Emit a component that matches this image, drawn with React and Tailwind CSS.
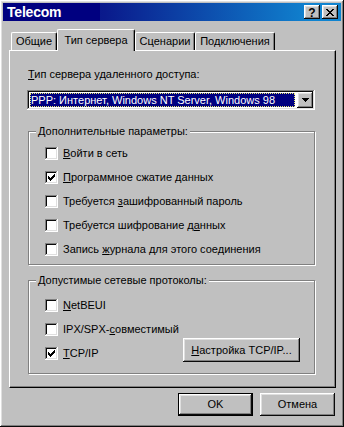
import React from 'react';

// Win98 bevels
const raised =
  'shadow-[inset_-1px_-1px_#0a0a0a,inset_1px_1px_#ffffff,inset_-2px_-2px_#808080,inset_2px_2px_#dfdfdf]';
const sunken =
  'shadow-[inset_-1px_-1px_#ffffff,inset_1px_1px_#808080,inset_-2px_-2px_#dfdfdf,inset_2px_2px_#0a0a0a]';

const CHECK_COLS = [2, 3, 4, 3, 2, 1, 0];

const Check = () => (
  <svg width="7" height="7" viewBox="0 0 7 7" shapeRendering="crispEdges">
    {CHECK_COLS.map((y, x) => (
      <rect key={x} x={x} y={y} width="1" height="3" fill="#000" />
    ))}
  </svg>
);

const Checkbox = ({ checked, children }) => (
  <div className="flex items-center h-[24px]">
    <div className={`w-[13px] h-[13px] bg-white flex items-center justify-center ${sunken}`}>
      {checked && <Check />}
    </div>
    <span className="ml-[5px]">{children}</span>
  </div>
);

const GroupBox = ({ label, className, children }) => (
  <div
    className={`relative ml-[1px] w-[287px] border border-[#808080] shadow-[inset_1px_1px_#ffffff,1px_1px_#ffffff] ${className}`}
  >
    <span className="absolute left-[7px] top-[-7px] bg-[#c0c0c0] px-[2px] leading-[13px]">{label}</span>
    {children}
  </div>
);

const Tab = ({ active, className, children }) => (
  <div
    className={`flex items-center justify-center border-t border-l border-white border-r border-r-black rounded-tl-[2px] rounded-tr-[2px] shadow-[inset_-1px_0_#808080] bg-[#c0c0c0] ${
      active ? 'relative z-10 h-[22px] -mb-[1px]' : 'h-[18px]'
    } ${className}`}
  >
    {children}
  </div>
);

const TitleButton = ({ children }) => (
  <div className={`w-[16px] h-[14px] bg-[#c0c0c0] flex items-center justify-center ${raised}`}>{children}</div>
);

const CLOSE_PX = [
  [0, 0], [1, 0], [6, 0], [7, 0],
  [1, 1], [2, 1], [5, 1], [6, 1],
  [2, 2], [3, 2], [4, 2], [5, 2],
  [3, 3], [4, 3],
  [2, 4], [3, 4], [4, 4], [5, 4],
  [1, 5], [2, 5], [5, 5], [6, 5],
  [0, 6], [1, 6], [6, 6], [7, 6],
];

export default function App() {
  return (
    <div
      className={`w-[344px] h-[427px] bg-[#c0c0c0] p-[3px] flex flex-col text-[11px] text-black ${raised}`}
      style={{ fontFamily: '"Liberation Sans", Arial, sans-serif' }}
    >
      {/* title bar */}
      <div className="h-[18px] flex items-center bg-[linear-gradient(90deg,#000080_0%,#0a1a8c_30%,#1084d0_92%)]">
        <div className="w-[97px] h-full bg-[#000080] flex items-center pl-[4px]">
          <span className="text-white font-bold text-[14px] leading-none tracking-[-0.2px]">Telecom</span>
        </div>
        <div className="flex-1" />
        <div className="flex gap-[2px] pr-[3px]">
          <TitleButton>
            <span className="font-bold text-[12px] leading-none mt-[1px]">?</span>
          </TitleButton>
          <TitleButton>
            <svg width="8" height="7" viewBox="0 0 8 7" shapeRendering="crispEdges">
              {CLOSE_PX.map(([x, y], i) => (
                <rect key={i} x={x} y={y} width="1" height="1" fill="#000" />
              ))}
            </svg>
          </TitleButton>
        </div>
      </div>

      {/* tabs */}
      <div className="mt-[8px] pl-[6px] flex items-end h-[21px]">
        <Tab className="ml-[2px] w-[46px]">Общие</Tab>
        <Tab active className="w-[78px]">Тип сервера</Tab>
        <Tab className="w-[60px]">Сценарии</Tab>
        <Tab className="w-[80px]">Подключения</Tab>
      </div>

      {/* panel */}
      <div className="ml-[6px] w-[327px] h-[338px] border-t border-l border-white border-r border-b border-r-black border-b-black shadow-[inset_-1px_-1px_#808080] pl-[17px] flex flex-col">
        <div className="mt-[17px] ml-[1px] leading-[13px]">
          <u>Т</u>ип сервера удаленного доступа:
        </div>

        <div className={`mt-[9px] w-[288px] h-[20px] bg-white p-[2px] flex ${sunken}`}>
          <div className="flex-1 p-[1px] pr-[2px]">
            <div className="h-full bg-[#000080] text-white flex items-center pl-[1px] leading-none outline outline-1 outline-dotted outline-offset-[-1px] outline-[#e8e870]">
              PPP: Интернет, Windows NT Server, Windows 98
            </div>
          </div>
          <div className={`w-[16px] h-[16px] bg-[#c0c0c0] flex items-center justify-center ${raised}`}>
            <svg width="7" height="4" viewBox="0 0 7 4" shapeRendering="crispEdges">
              <path d="M0 0h7v1H0zM1 1h5v1H1zM2 2h3v1H2zM3 3h1v1H3z" fill="#000" />
            </svg>
          </div>
        </div>

        <GroupBox label="Дополнительные параметры:" className="mt-[21px] h-[134px] pl-[16px] pt-[9.5px]">
          <Checkbox>
            <u>В</u>ойти в сеть
          </Checkbox>
          <Checkbox checked>
            <u>П</u>рограммное сжатие данных
          </Checkbox>
          <Checkbox>
            Требуется <u>з</u>ашифрованный пароль
          </Checkbox>
          <Checkbox>
            Требуется шифрование д<u>а</u>нных
          </Checkbox>
          <Checkbox>
            Запись <u>ж</u>урнала для этого соединения
          </Checkbox>
        </GroupBox>

        <GroupBox label="Допустимые сетевые протоколы:" className="mt-[15px] h-[94px] pl-[16px] pt-[12.5px]">
          <Checkbox>
            <u>N</u>etBEUI
          </Checkbox>
          <Checkbox>
            IPX/SPX-<u>с</u>овместимый
          </Checkbox>
          <div className="flex items-center justify-between h-[24px] pr-[14px]">
            <Checkbox checked>
              <u>T</u>CP/IP
            </Checkbox>
            <button className={`w-[117px] h-[24px] mb-[7px] bg-[#c0c0c0] flex items-center justify-center ${raised}`}>
              <span>
                <u>Н</u>астройка TCP/IP...
              </span>
            </button>
          </div>
        </GroupBox>
      </div>

      {/* dialog buttons */}
      <div className="mt-[5px] flex justify-end gap-[7px] pr-[6px]">
        <button className="w-[75px] h-[23px] border border-black bg-[#c0c0c0]">
          <div className={`w-full h-full flex items-center justify-center ${raised}`}>OK</div>
        </button>
        <button className={`w-[75px] h-[23px] bg-[#c0c0c0] flex items-center justify-center ${raised}`}>
          Отмена
        </button>
      </div>
    </div>
  );
}
